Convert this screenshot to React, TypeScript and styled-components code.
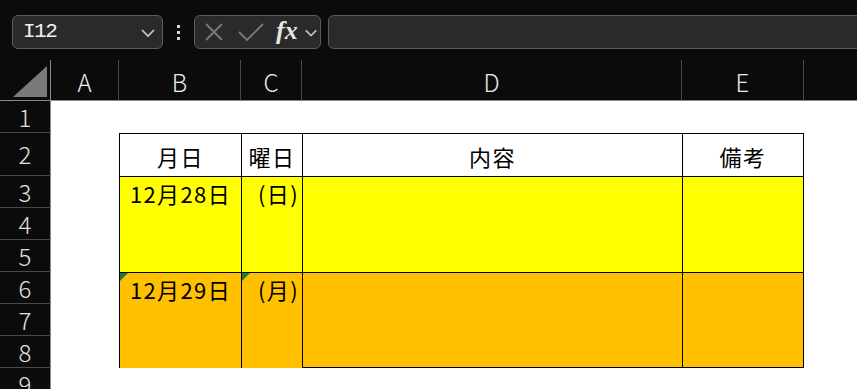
import React from 'react'
import styled, { createGlobalStyle } from 'styled-components'

const GlobalStyle = createGlobalStyle`
  html, body {
    margin: 0;
    padding: 0;
    background: #0b0b0b;
    overflow: hidden;
  }
  * { box-sizing: border-box; }
`

const COLS = ['A', 'B', 'C', 'D', 'E', '']
const ROWS = [1, 2, 3, 4, 5, 6, 7, 8, 9]

const days = [
  { date: '12月28日', week: '(日)', fill: '#ffff00', row: 4, flag: false },
  { date: '12月29日', week: '(月)', fill: '#ffc000', row: 7, flag: true },
]

export default function App() {
  return (
    <Page>
      <GlobalStyle />
      <Toolbar>
        <NameBox>
          <NameText>I12</NameText>
          <Chevron />
        </NameBox>
        <Grip>
          <Dot />
          <Dot />
          <Dot />
        </Grip>
        <FxBox>
          <ToolIcon width="20" height="20" viewBox="0 0 20 20">
            <path d="M2 2 L18 18 M18 2 L2 18" stroke="#7a7a7a" strokeWidth="1.8" fill="none" />
          </ToolIcon>
          <ToolIcon width="26" height="20" viewBox="0 0 26 20" $gap={14}>
            <path d="M1 10 L9 18 L25 2" stroke="#7a7a7a" strokeWidth="1.8" fill="none" />
          </ToolIcon>
          <FxText>fx</FxText>
          <Chevron small />
        </FxBox>
        <FormulaInput />
      </Toolbar>

      <Sheet>
        <Corner>
          <svg width="50" height="40" viewBox="0 0 50 40">
            <polygon points="13,37 47,37 47,6" fill="#7a7a7a" />
          </svg>
        </Corner>
        {COLS.map((c, i) => (
          <ColHead key={i} $last={c === ''}>{c}</ColHead>
        ))}
        {ROWS.map((r) => (
          <RowHead key={r} style={{ gridRow: r + 1 }}>{r}</RowHead>
        ))}

        <Canvas />

        <HeadCell $col={3}>月日</HeadCell>
        <HeadCell $col={4}>曜日</HeadCell>
        <HeadCell $col={5}>内容</HeadCell>
        <HeadCell $col={6} $right>備考</HeadCell>

        {days.map((d, i) => (
          <React.Fragment key={d.date}>
            <DayCell $col={3} $row={d.row} $fill={d.fill} $flag={d.flag} $align="center">
              {d.date}
            </DayCell>
            <DayCell $col={4} $row={d.row} $fill={d.fill} $flag={d.flag} $align="right">
              {d.week}
            </DayCell>
            <DayCell $col={5} $row={d.row} $fill={d.fill} $bottom={i === 1} />
            <DayCell $col={6} $row={d.row} $fill={d.fill} $bottom={i === 1} $right />
          </React.Fragment>
        ))}
      </Sheet>
    </Page>
  )
}

const Chevron = ({ small }: { small?: boolean }) => (
  <ChevronIcon width={small ? 14 : 16} height="10" viewBox="0 0 16 10" $small={small}>
    <path d="M2 2 L8 8 L14 2" stroke="#c8c8c8" strokeWidth="1.7" fill="none" />
  </ChevronIcon>
)

const Page = styled.div`
  width: 857px;
  height: 389px;
  background: #0b0b0b;
  overflow: hidden;
`

const Toolbar = styled.div`
  display: flex;
  align-items: center;
  height: 60px;
  padding: 15px 0 11px 12px;
`

const Box = styled.div`
  height: 34px;
  display: flex;
  align-items: center;
  background: #2a2a2a;
  border: 1px solid #5c5c5c;
  border-radius: 6px;
`

const NameBox = styled(Box)`
  width: 151px;
  padding: 0 6px 0 10px;
  justify-content: space-between;
`

const NameText = styled.span`
  font-family: "Liberation Mono", "DejaVu Sans Mono", monospace;
  font-size: 21px;
  line-height: 24px;
  letter-spacing: -1.5px;
  color: #f2f2f2;
`

const ChevronIcon = styled.svg<{ $small?: boolean }>`
  display: block;
  margin-top: 2px;
  margin-left: ${(p) => (p.$small ? '6px' : '0')};
`

const Grip = styled.div`
  width: 31px;
  display: flex;
  flex-direction: column;
  align-items: center;
  gap: 3px;
`

const Dot = styled.span`
  width: 3px;
  height: 3px;
  background: #d8d8d8;
`

const FxBox = styled(Box)`
  width: 127px;
  padding: 0 0 0 9px;
`

const ToolIcon = styled.svg<{ $gap?: number }>`
  display: block;
  margin-left: ${(p) => p.$gap || 0}px;
`

const FxText = styled.span`
  font-family: "Liberation Serif", "DejaVu Serif", serif;
  font-style: italic;
  font-weight: bold;
  font-size: 26px;
  line-height: 26px;
  color: #e6e6e6;
  margin-left: 12px;
  margin-top: -2px;
`

const FormulaInput = styled(Box)`
  flex: 1;
  margin-left: 7px;
  margin-right: -20px;
`

const Sheet = styled.div`
  display: grid;
  grid-template-columns: 51px 68px 122px 61px 380px 122px 1fr;
  grid-template-rows: 41px 32px 43px repeat(7, 32px);
  height: 329px;
`

const Corner = styled.div`
  grid-row: 1;
  grid-column: 1;
  border-right: 1px solid #8a8a8a;
  border-bottom: 1px solid #8a8a8a;
  svg { display: block; }
`

const sheetFont = `"Noto Sans CJK JP", "Noto Sans", sans-serif`

const ColHead = styled.div<{ $last?: boolean }>`
  grid-row: 1;
  display: flex;
  align-items: center;
  justify-content: center;
  border-bottom: 1px solid #8a8a8a;
  border-right: ${(p) => (p.$last ? 'none' : '1px solid #4a4a4a')};
  font-family: ${sheetFont};
  font-weight: 300;
  font-size: 24px;
  color: #ececec;
  padding-top: 2px;
`

const RowHead = styled.div`
  grid-column: 1;
  display: flex;
  align-items: center;
  justify-content: center;
  border-right: 1px solid #8a8a8a;
  border-bottom: 1px solid #4a4a4a;
  font-family: ${sheetFont};
  font-weight: 300;
  font-size: 24px;
  line-height: 24px;
  color: #e2e2e2;
`

const Canvas = styled.div`
  grid-column: 2 / -1;
  grid-row: 2 / -1;
  background: #ffffff;
`

const Cell = styled.div<{ $col: number; $right?: boolean; $bottom?: boolean }>`
  grid-column: ${(p) => p.$col};
  border-top: 1px solid #000;
  border-left: 1px solid #000;
  border-right: ${(p) => (p.$right ? '1px solid #000' : 'none')};
  border-bottom: ${(p) => (p.$bottom ? '1px solid #000' : 'none')};
  font-family: ${sheetFont};
  font-size: 22px;
  color: #000;
  line-height: 28px;
  white-space: nowrap;
`

const HeadCell = styled(Cell)`
  grid-row: 3;
  background: #ffffff;
  display: flex;
  align-items: center;
  justify-content: center;
  padding-top: 2px;
  letter-spacing: 1.5px;
`

const DayCell = styled(Cell)<{ $row: number; $fill: string; $flag?: boolean; $align?: string }>`
  grid-row: ${(p) => p.$row} / span 3;
  background: ${(p) => p.$fill};
  position: relative;
  padding: 2px 3px 0 3px;
  text-align: ${(p) => p.$align || 'left'};
  letter-spacing: 1.4px;

  &::before {
    content: '';
    display: ${(p) => (p.$flag ? 'block' : 'none')};
    position: absolute;
    left: 0;
    top: 0;
    border-top: 8px solid #1f7a38;
    border-right: 8px solid transparent;
  }
`
